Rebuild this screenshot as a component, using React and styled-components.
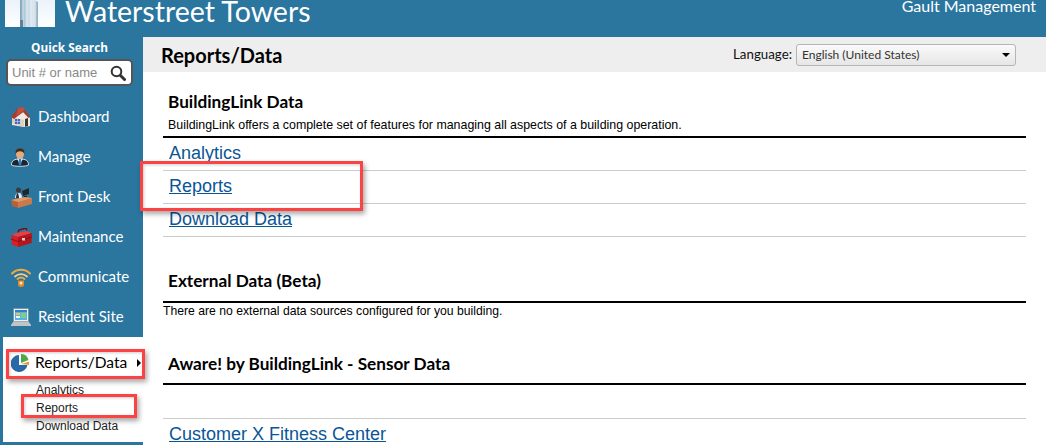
import styled, { createGlobalStyle } from 'styled-components'

const GlobalStyle = createGlobalStyle`
   html, body { margin: 0; padding: 0; background: #fff; }
   body { font-family: "Liberation Sans", Arial, sans-serif; }
   * { box-sizing: border-box; }
`

// STYLES
const Page = styled.div`
   position: relative;
   width: 1046px;
   height: 445px;
   overflow: hidden;
   background: #fff;
`
const Header = styled.header`
   display: flex;
   justify-content: space-between;
   height: 37px;
   padding: 0 10px 0 5px;
   overflow: hidden;
   background: #2a769f;
`
const Brand = styled.div`
   display: flex;
   align-items: flex-start;
   gap: 10px;
`
const Logo = styled.div`
   width: 50px;
   height: 27px;
   line-height: 0;
`
const BrandName = styled.h1`
   margin: -7px 0 0;
   font: 400 28.5px/36px Lato, sans-serif;
   color: #fff;
`
const Company = styled.div`
   margin-top: -3px;
   font: 400 16px/18px Lato, sans-serif;
   color: #fff;
`
const Body = styled.div`
   display: flex;
   height: 408px;
`
const Sidebar = styled.aside`
   flex: 0 0 143px;
   display: flex;
   flex-direction: column;
   background: #2a769f;
   padding-bottom: 3px;
`
const SearchPanel = styled.div`
   height: 60px;
   padding: 3px 6px 0;
`
const SearchLabel = styled.div`
   font: 700 11.8px/15px "Open Sans", sans-serif;
   color: #fff;
   text-align: center;
   margin-bottom: 4px;
   width: 127px;
`
const SearchBox = styled.div`
   display: flex;
   align-items: center;
   justify-content: space-between;
   width: 127px;
   height: 27px;
   padding: 0 5px 0 4px;
   background: #fff;
   border: 2px solid #555;
   border-radius: 5px;
   font: 400 13px/1 "Liberation Sans", sans-serif;
   color: #888;
`
const NavList = styled.nav`
   display: flex;
   flex-direction: column;
`
const NavItem = styled.div`
   display: flex;
   align-items: center;
   height: 40px;
   padding: 0 0 2px 11px;
   font: 400 15px/1 Lato, sans-serif;
   color: #fff;
`
const NavIcon = styled.span`
   flex: 0 0 27px;
   display: flex;
   align-items: center;
   margin-top: 2px;
`
const SubPanel = styled.div`
   flex: 1;
   margin-left: 3px;
   background: #fff;
`
const ActiveItem = styled.div`
   display: flex;
   align-items: center;
   height: 44px;
   padding: 8px 0 0 8px;
   gap: 6px;
   font: 400 15.5px/1 Lato, sans-serif;
   color: #000;
`
const Caret = styled.span`
   width: 0;
   height: 0;
   margin-left: 4px;
   border-left: 4px solid #000;
   border-top: 4px solid transparent;
   border-bottom: 4px solid transparent;
`
const SubLink = styled.div`
   height: 18px;
   padding-left: 33px;
   font: 400 12px/18px "Liberation Sans", sans-serif;
   color: #222;
`
const Main = styled.main`
   flex: 1;
   min-width: 0;
`
const TitleBar = styled.div`
   display: flex;
   align-items: center;
   justify-content: space-between;
   height: 35px;
   padding: 0 30px 0 18px;
   background: #eee;
`
const PageTitle = styled.h2`
   margin: 0;
   font: 700 20px/1 Lato, sans-serif;
   color: #000;
`
const Language = styled.div`
   display: flex;
   align-items: center;
   gap: 4px;
   font: 400 13.3px/1 Lato, sans-serif;
   color: #111;
`
const SelectBox = styled.div`
   display: flex;
   align-items: center;
   justify-content: space-between;
   width: 220px;
   height: 22px;
   padding: 0 5px 0 5px;
   border: 1px solid #b5b5b5;
   border-radius: 3px;
   background: linear-gradient(#fafafa, #e6e6e6);
   font: 400 12px/1 Lato, sans-serif;
   color: #333;
`
const SelectArrow = styled.span`
   width: 0;
   height: 0;
   border-top: 4px solid #000;
   border-left: 4px solid transparent;
   border-right: 4px solid transparent;
`
const Content = styled.div`
   padding: 20px 20px 0;
`
const Section = styled.section`
   margin-bottom: ${p => p.$gap}px;
`
const SectionTitle = styled.h3`
   margin: 0 0 0 5px;
   font: 700 17.2px/20px Lato, sans-serif;
   color: #000;
`
const SectionText = styled.p`
   margin: ${p => p.$top}px 0 0 ${p => p.$indent}px;
   font: 400 ${p => p.$size}px/15px "Liberation Sans", sans-serif;
   color: #000;
`
const Rule = styled.div`
   height: 2px;
   background: #000;
   margin-top: ${p => p.$top}px;
`
const DataRow = styled.div`
   height: ${p => p.$height || 33}px;
   padding-left: 6px;
   border-bottom: 1px solid #ccc;
   font: 400 18px/30px "Liberation Sans", sans-serif;
`
const DataLink = styled.a`
   color: #0a5596;
   text-decoration: ${p => (p.$plain ? 'none' : 'underline')};
`
// Encadres rouges d'annotation, poses par dessus la capture
const Callout = styled.div`
   position: absolute;
   left: ${p => p.$x}px;
   top: ${p => p.$y}px;
   width: ${p => p.$w}px;
   height: ${p => p.$h}px;
   border: 3px solid #fb4343;
   box-shadow: 2px 3px 5px rgba(0, 0, 0, 0.35), inset 1px 1px 3px rgba(0, 0, 0, 0.2);
`

// ICONS
const BuildingLogo = () => (
   <svg width="50" height="27" viewBox="0 0 50 27">
      <defs>
         <linearGradient id="sky" x1="0" y1="0" x2="0" y2="1">
            <stop offset="0" stopColor="#eaf3fa" />
            <stop offset="1" stopColor="#ffffff" />
         </linearGradient>
         <linearGradient id="tower" x1="0" y1="0" x2="1" y2="0">
            <stop offset="0" stopColor="#7fa3ba" />
            <stop offset=".35" stopColor="#c5d9e6" />
            <stop offset=".75" stopColor="#dbe7ef" />
            <stop offset="1" stopColor="#8eaabd" />
         </linearGradient>
      </defs>
      <rect width="50" height="27" fill="url(#sky)" />
      <path d="M15 0h14l4 2v25H15z" fill="url(#tower)" />
      <path d="M18 0v27M22 0v27M26 0v27M30 1v26" stroke="#f0f5f9" strokeWidth=".7" />
      <path d="M15 20h3v7h-3z" fill="#5f8296" />
   </svg>
)
const SearchIcon = () => (
   <svg width="16" height="16" viewBox="0 0 16 16" fill="none" stroke="#333">
      <circle cx="6.500" cy="6.500" r="4.800" strokeWidth="2" />
      <path d="M10.500 10.500l4 4" strokeWidth="3" strokeLinecap="round" />
   </svg>
)
const HouseIcon = () => (
   <svg width="20" height="20" viewBox="0 0 20 20">
      <path d="M1 10l5-1 8-5 5 7v8l-6 1-12-2z" fill="#efe9df" />
      <path d="M1 16.500L13 20v-7l-12-3z" fill="#d9d1c4" />
      <path d="M0 10L7 1l5-1 7 10-1.500 1L12 5 3 12z" fill="#a83c30" />
      <path d="M7 1l5-1 2 3-9 6z" fill="#c2503f" />
      <path d="M14 12l3-1v8l-3 .700z" fill="#3a3530" />
      <rect x="4" y="12" width="5" height="5" fill="#4a62c0" />
      <path d="M6.500 12v5M4 14.500h5" stroke="#cfd6f0" strokeWidth=".6" />
   </svg>
)
const ManagerIcon = () => (
   <svg width="18" height="19" viewBox="0 0 18 19">
      <path d="M.5 17c0-4.500 3-6 8.500-6s8.500 1.500 8.500 6c-2 1.700-15 1.700-17 0z" fill="#1b2530" stroke="#fff" strokeWidth=".8" />
      <path d="M6 10.500h6L9 17z" fill="#e9edf2" />
      <path d="M8 11h2l.6 5L9 17.500 7.400 16z" fill="#2f7fc4" />
      <ellipse cx="9" cy="6" rx="4" ry="5" fill="#e2ad82" />
      <path d="M4.800 6C4 2 6 .5 9 .5S14 2 13.200 6c-.6-2-2-2.800-4.200-2.800S5.400 4 4.800 6z" fill="#4b2b15" />
   </svg>
)
const DeskIcon = () => (
   <svg width="21" height="21" viewBox="0 0 21 21">
      <path d="M4 11c0-3 1-5 3.500-5S11 8 11 11z" fill="#e8edf0" />
      <path d="M5 11c0-3 1-5 1.500-5S8 8 8 11z" fill="#2b2f36" />
      <circle cx="7.500" cy="3" r="2.500" fill="#3d3a3a" />
      <path d="M11 4l7-3v6l-6 2z" fill="#23262c" />
      <path d="M13 9h3v2h-3z" fill="#23262c" />
      <path d="M0 13l14-3 7 1-1 2-13 3z" fill="#e19a68" />
      <path d="M0 13l7 2v6l-6-2z" fill="#b5623a" />
      <path d="M7 15l14-4v6L7 21z" fill="#c87a4c" />
   </svg>
)
const ToolboxIcon = () => (
   <svg width="21" height="19" viewBox="0 0 21 19">
      <path d="M7 4.500L8 2l7-2 1 2.500" fill="none" stroke="#6f0d10" strokeWidth="1.400" />
      <path d="M1 6l14-3 6 2-14 4z" fill="#ea3f44" />
      <path d="M0 7l7 2v10l-6-2.500z" fill="#d81f26" />
      <path d="M7 9l14-4-.5 10L7 19z" fill="#b8141b" />
      <path d="M0 11l7 2.500L21 9" fill="none" stroke="#7d0e12" strokeWidth=".8" />
      <rect x="11" y="10" width="3" height="2.500" fill="#e9c9c9" />
   </svg>
)
const WifiIcon = () => (
   <svg width="20" height="19" viewBox="0 0 20 19" fill="none" strokeLinecap="round">
      <path d="M1 5.500c5-5 13-5 18 0" stroke="#f6a83c" strokeWidth="2" />
      <path d="M4 8.500c3.500-3.300 8.500-3.300 12 0" stroke="#fbcf8a" strokeWidth="1.800" />
      <path d="M6.500 11c2-1.700 5-1.700 7 0" stroke="#f6a83c" strokeWidth="1.800" />
      <path d="M7 12.500h6v4a3 2.500 0 0 1-6 0z" fill="#e48c2a" />
      <circle cx="10" cy="15" r="1.500" fill="#f9e2bd" />
   </svg>
)
const LaptopIcon = () => (
   <svg width="20" height="18" viewBox="0 0 20 18">
      <rect x="2.500" y=".5" width="15" height="13" fill="#eef1f3" stroke="#7d868b" strokeWidth=".7" />
      <rect x="4" y="2" width="12" height="10" fill="#54b3ea" />
      <rect x="4" y="2" width="12" height="2" fill="#2f7fd0" />
      <rect x="5" y="5" width="4" height="2" fill="#f0c24e" />
      <rect x="10" y="5" width="5" height="5" fill="#84cd7d" />
      <rect x="5" y="8" width="4" height="2" fill="#f4f4f4" />
      <path d="M2.500 13.500h15L20 17v1H0v-1z" fill="#bfc4c7" />
   </svg>
)
const PieIcon = () => (
   <svg width="18" height="18" viewBox="0 0 18 18">
      <path d="M8 1a8.500 8.500 0 1 0 8.500 10H8z" fill="#2768a6" />
      <path d="M10 0a8 8 0 0 1 7.500 6L10 9z" fill="#4da84d" />
      <path d="M10 10l8-2.500c.2 1 .2 2 .1 3.500z" fill="#ef9b2d" />
   </svg>
)

const navItems = [
   { label: 'Dashboard', icon: <HouseIcon /> },
   { label: 'Manage', icon: <ManagerIcon /> },
   { label: 'Front Desk', icon: <DeskIcon /> },
   { label: 'Maintenance', icon: <ToolboxIcon /> },
   { label: 'Communicate', icon: <WifiIcon /> },
   { label: 'Resident Site', icon: <LaptopIcon /> },
]

function App() {
   return (
      <Page>
         <GlobalStyle />
         <Header>
            <Brand>
               <Logo><BuildingLogo /></Logo>
               <BrandName>Waterstreet Towers</BrandName>
            </Brand>
            <Company>Gault Management</Company>
         </Header>

         <Body>
            <Sidebar>
               <SearchPanel>
                  <SearchLabel>Quick Search</SearchLabel>
                  <SearchBox>Unit # or name<SearchIcon /></SearchBox>
               </SearchPanel>
               <NavList>
                  {navItems.map(item => (
                     <NavItem key={item.label}><NavIcon>{item.icon}</NavIcon>{item.label}</NavItem>
                  ))}
               </NavList>
               <SubPanel>
                  <ActiveItem><PieIcon />Reports/Data<Caret /></ActiveItem>
                  <SubLink>Analytics</SubLink>
                  <SubLink>Reports</SubLink>
                  <SubLink>Download Data</SubLink>
               </SubPanel>
            </Sidebar>

            <Main>
               <TitleBar>
                  <PageTitle>Reports/Data</PageTitle>
                  <Language>
                     Language:
                     <SelectBox>English (United States)<SelectArrow /></SelectBox>
                  </Language>
               </TitleBar>
               <Content>
                  <Section $gap={34}>
                     <SectionTitle>BuildingLink Data</SectionTitle>
                     <SectionText $top={6} $indent={5} $size={12.4}>BuildingLink offers a complete set of features for managing all aspects of a building operation.</SectionText>
                     <Rule $top={3} />
                     <DataRow><DataLink $plain href="#">Analytics</DataLink></DataRow>
                     <DataRow><DataLink href="#">Reports</DataLink></DataRow>
                     <DataRow><DataLink href="#">Download Data</DataLink></DataRow>
                  </Section>
                  <Section $gap={35}>
                     <SectionTitle>External Data (Beta)</SectionTitle>
                     <Rule $top={10} />
                     <SectionText $top={1} $indent={0} $size={12.2}>There are no external data sources configured for you building.</SectionText>
                  </Section>
                  <Section $gap={0}>
                     <SectionTitle>Aware! by BuildingLink - Sensor Data</SectionTitle>
                     <Rule $top={9} />
                     <DataRow $height={34} />
                     <DataRow><DataLink href="#">Customer X Fitness Center</DataLink></DataRow>
                  </Section>
               </Content>
            </Main>
         </Body>

         <Callout $x={140} $y={161} $w={223} $h={50} />
         <Callout $x={6} $y={349} $w={139} $h={30} />
         <Callout $x={21} $y={394} $w={116} $h={24} />
      </Page>
   )
}

export default App
